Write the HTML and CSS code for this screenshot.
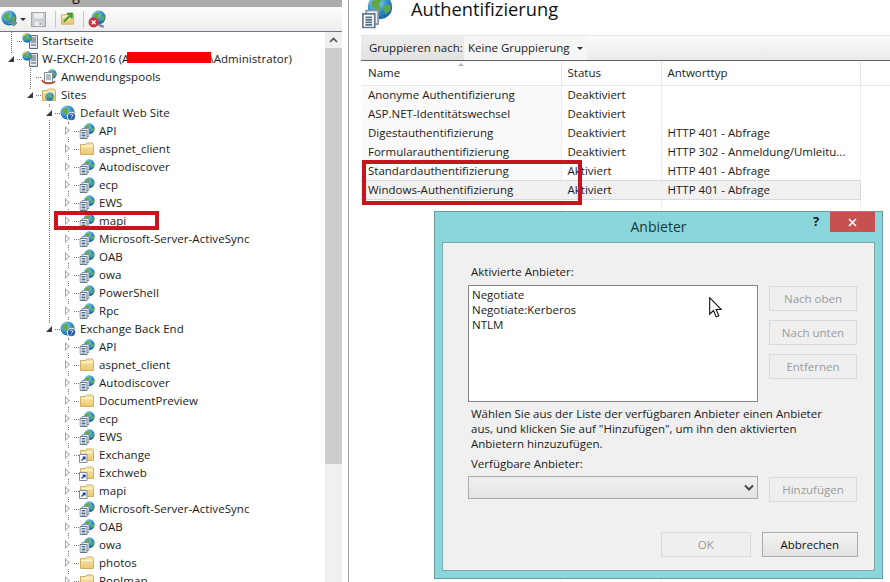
FILE: index.html
```html
<!DOCTYPE html>
<html lang="de">
<head>
<meta charset="utf-8">
<title>Authentifizierung</title>
<link rel="stylesheet" href="styles.css">
</head>
<body>
<svg class="defs" aria-hidden="true">
  <defs>
    <radialGradient id="gb" cx="0.35" cy="0.3" r="0.8"><stop offset="0" stop-color="#9fdcf5"/><stop offset="0.55" stop-color="#2f8fc9"/><stop offset="1" stop-color="#135a93"/></radialGradient>
    <linearGradient id="gf" x1="0" y1="0" x2="0" y2="1"><stop offset="0" stop-color="#fbeab4"/><stop offset="1" stop-color="#edc76e"/></linearGradient>
    <symbol id="globe" viewBox="0 0 16 16">
      <circle cx="8" cy="8" r="7.5" fill="url(#gb)"/>
      <path d="M3 4.500 7 2.500 9 4 7.500 6.500 8.500 9 6.500 11.500 5 9 2.500 7.500Z" fill="#5fa84a"/>
      <path d="M10.500 7 14.500 6.500 14.500 10 11.500 12.500 10.500 10Z" fill="#5fa84a"/>
    </symbol>
    <symbol id="doc" viewBox="0 0 10 11">
      <path d="M2.500.5h7v8h-7z" fill="#e8edf2" stroke="#8494a3"/>
      <path d="M.5 2.500h7v8h-7z" fill="#fff" stroke="#65788a"/>
      <path d="M2 4.500h4M2 6h4M2 7.500h4M2 9h4" stroke="#52708c"/>
    </symbol>
    <symbol id="app" viewBox="0 0 16 16">
      <use href="#globe" x="4.500" y="0" width="11.500" height="11.500"/>
      <use href="#doc" x="0.500" y="5" width="10" height="11"/>
    </symbol>
    <symbol id="app-large" viewBox="0 0 31 31">
      <use href="#globe" x="5" y="-6" width="26" height="26"/>
      <use href="#doc" x="0" y="9" width="17" height="20"/>
    </symbol>
    <symbol id="folder" viewBox="0 0 16 16">
      <path d="M1.500 3.500h5l1-1.500h6l1 1.500v10h-13z" fill="url(#gf)" stroke="#cfae68"/>
      <path d="M2.500 5.500h11" stroke="#fff6d8"/>
    </symbol>
    <symbol id="vdir" viewBox="0 0 16 16">
      <use href="#folder" width="16" height="16"/>
      <path d="M.5 7.500h7.500v8h-7.500z" fill="#fff" stroke="#7d8ca0"/>
      <path d="M2.500 13.500 5.500 10.500M3.500 10h2.500v2.500" fill="none" stroke="#1a3c8f" stroke-width="1.200"/>
    </symbol>
    <symbol id="site" viewBox="0 0 16 16">
      <use href="#globe" width="15" height="15"/>
      <circle cx="11.500" cy="11.500" r="4.200" fill="#2a5ea8" stroke="#fff"/>
      <path d="M10.200 10.200c.3-1.300 2.700-1.200 2.700.2 0 1-1.300 1-1.300 2M11.600 13.600v.6" fill="none" stroke="#fff"/>
    </symbol>
    <symbol id="server" viewBox="0 0 16 16">
      <path d="M7.500 2.500h8v13h-8z" fill="#dfe5ea" stroke="#5f6c78"/>
      <path d="M9 5h5M9 7h5M9 9h5M9 12h5" stroke="#4e5e6c"/>
      <use href="#globe" x="0" y="0" width="10" height="10"/>
      <path d="M1.500 2 5 .6" stroke="#f2c94c" stroke-width="1.500"/>
    </symbol>
    <symbol id="pools" viewBox="0 0 16 16">
      <use href="#globe" x="6" y="0" width="10" height="10"/>
      <path d="M3.500 3.500h8v10h-8z" fill="#fff" stroke="#7a8794"/>
      <path d="M5 6h5M5 8h5M5 10h5" stroke="#6a7a88"/>
      <path d="M1 11c1 4 11 5 13 1" fill="none" stroke="#c2472c" stroke-width="1.600"/>
    </symbol>
    <symbol id="sites" viewBox="0 0 16 16">
      <use href="#folder" width="16" height="16"/>
      <use href="#globe" x="4" y="5" width="9" height="9"/>
    </symbol>
  </defs>
</svg>

<div class="app">
  <aside class="left">
    <div class="strip"><span class="strip-text">Verbindungen</span></div>
    <div class="toolbar">
      <svg class="tb-big" viewBox="0 0 18 18"><use href="#globe" width="16" height="16"/><path d="M7 13h8m-3-3 3 3-3 3" fill="none" stroke="#6d8f8a" stroke-width="2"/></svg>
      <span class="tb-caret"></span>
      <svg class="tb-save" viewBox="0 0 16 16"><path d="M.5.500h15v15h-15z" fill="#c9cdd2" stroke="#9aa0a6"/><path d="M3 1h10v6h-10zM4 10h8v5h-8z" fill="#eceef0"/><path d="M9 11h2v3h-2z" fill="#9aa0a6"/></svg>
      <span class="tb-sep sep-a"></span>
      <svg class="tb-icon" viewBox="0 0 16 16"><use href="#folder" width="16" height="16"/><path d="M4 11 11 4M7.500 2.500h5v5" fill="none" stroke="#3c9a34" stroke-width="2.200"/></svg>
      <span class="tb-sep sep-b"></span>
      <svg class="tb-conn" viewBox="0 0 16 16"><use href="#globe" x="3" width="13" height="13"/><path d="M9 13l5 2" stroke="#7b8a99" stroke-width="2"/><circle cx="5" cy="11" r="4.500" fill="#c8323c"/><path d="M3.300 9.300l3.400 3.400m0-3.400-3.400 3.400" stroke="#fff" stroke-width="1.200"/></svg>
    </div>
    <div class="tree-wrap">
      <nav class="tree">
        <div class="g g0">
          <div class="row"><span class="exp"></span><span class="dots"></span><svg class="ic"><use href="#server"/></svg><span class="lbl">Startseite</span></div>
          <div class="row"><span class="exp open"></span><span class="dots short"></span><svg class="ic"><use href="#server"/></svg><span class="lbl">W-EXCH-2016 (A<span class="gap-name"></span>\Administrator)</span></div>
        </div>
        <div class="g g1">
          <div class="row"><span class="exp"></span><span class="dots"></span><svg class="ic"><use href="#pools"/></svg><span class="lbl">Anwendungspools</span></div>
          <div class="row"><span class="exp open"></span><span class="dots short"></span><svg class="ic"><use href="#sites"/></svg><span class="lbl">Sites</span></div>
        </div>
        <div class="g g2">
          <div class="row"><span class="exp open"></span><span class="dots short"></span><svg class="ic"><use href="#site"/></svg><span class="lbl">Default Web Site</span></div>
          <div class="g g3">
            <div class="row"><span class="exp closed"></span><span class="dots"></span><svg class="ic"><use href="#app"/></svg><span class="lbl">API</span></div>
            <div class="row"><span class="exp closed"></span><span class="dots"></span><svg class="ic"><use href="#folder"/></svg><span class="lbl">aspnet_client</span></div>
            <div class="row"><span class="exp closed"></span><span class="dots"></span><svg class="ic"><use href="#app"/></svg><span class="lbl">Autodiscover</span></div>
            <div class="row"><span class="exp closed"></span><span class="dots"></span><svg class="ic"><use href="#app"/></svg><span class="lbl">ecp</span></div>
            <div class="row"><span class="exp closed"></span><span class="dots"></span><svg class="ic"><use href="#app"/></svg><span class="lbl">EWS</span></div>
            <div class="row"><span class="exp closed"></span><span class="dots"></span><svg class="ic"><use href="#app"/></svg><span class="lbl">mapi</span></div>
            <div class="row"><span class="exp closed"></span><span class="dots"></span><svg class="ic"><use href="#app"/></svg><span class="lbl">Microsoft-Server-ActiveSync</span></div>
            <div class="row"><span class="exp closed"></span><span class="dots"></span><svg class="ic"><use href="#app"/></svg><span class="lbl">OAB</span></div>
            <div class="row"><span class="exp closed"></span><span class="dots"></span><svg class="ic"><use href="#app"/></svg><span class="lbl">owa</span></div>
            <div class="row"><span class="exp closed"></span><span class="dots"></span><svg class="ic"><use href="#app"/></svg><span class="lbl">PowerShell</span></div>
            <div class="row"><span class="exp closed"></span><span class="dots"></span><svg class="ic"><use href="#app"/></svg><span class="lbl">Rpc</span></div>
          </div>
          <div class="row"><span class="exp open"></span><span class="dots short"></span><svg class="ic"><use href="#site"/></svg><span class="lbl">Exchange Back End</span></div>
        </div>
        <div class="g g3-outer">
          <div class="row"><span class="exp closed"></span><span class="dots"></span><svg class="ic"><use href="#app"/></svg><span class="lbl">API</span></div>
          <div class="row"><span class="exp closed"></span><span class="dots"></span><svg class="ic"><use href="#folder"/></svg><span class="lbl">aspnet_client</span></div>
          <div class="row"><span class="exp closed"></span><span class="dots"></span><svg class="ic"><use href="#app"/></svg><span class="lbl">Autodiscover</span></div>
          <div class="row"><span class="exp closed"></span><span class="dots"></span><svg class="ic"><use href="#folder"/></svg><span class="lbl">DocumentPreview</span></div>
          <div class="row"><span class="exp closed"></span><span class="dots"></span><svg class="ic"><use href="#app"/></svg><span class="lbl">ecp</span></div>
          <div class="row"><span class="exp closed"></span><span class="dots"></span><svg class="ic"><use href="#app"/></svg><span class="lbl">EWS</span></div>
          <div class="row"><span class="exp closed"></span><span class="dots"></span><svg class="ic"><use href="#vdir"/></svg><span class="lbl">Exchange</span></div>
          <div class="row"><span class="exp closed"></span><span class="dots"></span><svg class="ic"><use href="#vdir"/></svg><span class="lbl">Exchweb</span></div>
          <div class="row"><span class="exp closed"></span><span class="dots"></span><svg class="ic"><use href="#vdir"/></svg><span class="lbl">mapi</span></div>
          <div class="row"><span class="exp closed"></span><span class="dots"></span><svg class="ic"><use href="#app"/></svg><span class="lbl">Microsoft-Server-ActiveSync</span></div>
          <div class="row"><span class="exp closed"></span><span class="dots"></span><svg class="ic"><use href="#app"/></svg><span class="lbl">OAB</span></div>
          <div class="row"><span class="exp closed"></span><span class="dots"></span><svg class="ic"><use href="#app"/></svg><span class="lbl">owa</span></div>
          <div class="row"><span class="exp closed"></span><span class="dots"></span><svg class="ic"><use href="#folder"/></svg><span class="lbl">photos</span></div>
          <div class="row"><span class="exp closed"></span><span class="dots"></span><svg class="ic"><use href="#folder"/></svg><span class="lbl">PopImap</span></div>
        </div>
      </nav>
      <div class="scrollbar">
        <div class="sb-up"><svg viewBox="0 0 9 6"><path d="M1 5 4.500 1.500 8 5" fill="none" stroke="#505050" stroke-width="1.600"/></svg></div>
        <div class="sb-thumb"></div>
      </div>
    </div>
  </aside>

  <main class="right">
    <header class="head">
      <svg class="head-icon"><use href="#app-large"/></svg>
      <h1>Authentifizierung</h1>
    </header>
    <div class="groupbar">
      <span class="gb-label">Gruppieren nach:</span>
      <span class="gb-value">Keine Gruppierung<span class="gb-caret"></span></span>
    </div>
    <div class="list">
      <table>
        <thead>
          <tr><th class="c1 sorted">Name</th><th class="c2">Status</th><th class="c3">Antworttyp</th><th></th></tr>
        </thead>
        <tbody>
          <tr><td class="c1">Anonyme Authentifizierung</td><td class="c2">Deaktiviert</td><td class="c3"></td><td></td></tr>
          <tr><td class="c1">ASP.NET-Identitätswechsel</td><td class="c2">Deaktiviert</td><td class="c3"></td><td></td></tr>
          <tr><td class="c1">Digestauthentifizierung</td><td class="c2">Deaktiviert</td><td class="c3">HTTP 401 - Abfrage</td><td></td></tr>
          <tr><td class="c1">Formularauthentifizierung</td><td class="c2">Deaktiviert</td><td class="c3">HTTP 302 - Anmeldung/Umleitu...</td><td></td></tr>
          <tr><td class="c1">Standardauthentifizierung</td><td class="c2">Aktiviert</td><td class="c3">HTTP 401 - Abfrage</td><td></td></tr>
          <tr class="sel"><td class="c1">Windows-Authentifizierung</td><td class="c2">Aktiviert</td><td class="c3">HTTP 401 - Abfrage</td><td></td></tr>
          <tr class="filler"><td class="c1"></td><td class="c2"></td><td class="c3"></td><td></td></tr>
        </tbody>
      </table>
    </div>
  </main>
</div>

<div class="redact"></div>
<div class="mark mark-tree"></div>
<div class="mark mark-list"></div>

<section class="dialog">
  <div class="titlebar">
    <span class="title">Anbieter</span>
    <span class="help">?</span>
    <span class="close"><svg viewBox="0 0 9 9"><path d="M1 1 8 8M8 1 1 8" stroke="#fff" stroke-width="1.600"/></svg></span>
  </div>
  <div class="client">
    <div class="providers">
      <label class="cap">Aktivierte Anbieter:</label>
      <div class="pgrid">
        <div class="listbox">
          <div>Negotiate</div>
          <div>Negotiate:Kerberos</div>
          <div>NTLM</div>
        </div>
        <div class="side">
          <span class="btn off">Nach oben</span>
          <span class="btn off">Nach unten</span>
          <span class="btn off">Entfernen</span>
        </div>
      </div>
    </div>
    <p class="hint">Wählen Sie aus der Liste der verfügbaren Anbieter einen Anbieter<br>aus, und klicken Sie auf "Hinzufügen", um ihn den aktivierten<br>Anbietern hinzuzufügen.</p>
    <label class="cap cap2">Verfügbare Anbieter:</label>
    <div class="pgrid pgrid2">
      <div class="select"><svg viewBox="0 0 10 7"><path d="M1 1.500 5 5.500 9 1.500" fill="none" stroke="#4a4a4a" stroke-width="2"/></svg></div>
      <span class="btn off">Hinzufügen</span>
    </div>
    <div class="actions">
      <span class="btn off wide-ok">OK</span>
      <span class="btn cancel">Abbrechen</span>
    </div>
  </div>
  <svg class="cursor" viewBox="0 0 13 21"><path d="M.7.700v16.500l3.800-3.700 2.700 6.400 2.600-1.100-2.700-6.300h5.200z" fill="#fff" stroke="#111" stroke-width="1.100"/></svg>
</section>
</body>
</html>
```
FILE: styles.css
```css
* { box-sizing: border-box; }
html, body { margin: 0; padding: 0; }
body {
  width: 890px; height: 582px; overflow: hidden; position: relative;
  background: #fff; color: #1a1a1a;
  font-family: "Open Sans", "Noto Sans", sans-serif; font-size: 12px;
}
.defs { position: absolute; width: 0; height: 0; }
.app { display: flex; height: 582px; }

/* left pane */
.left { width: 342px; flex: none; display: flex; flex-direction: column; height: 582px; }
.strip { height: 7px; background: #ababab; overflow: hidden; flex: none; }
.strip-text { display: block; margin: -14px 0 0 4px; font-size: 14px; line-height: 18px; color: #111; }
.toolbar {
  height: 25px; flex: none; display: flex; align-items: center; padding-left: 1px;
  background: linear-gradient(#fdfdfd, #ececec); border-bottom: 1px solid #6f7480;
}
.tb-big { width: 18px; height: 18px; flex: none; }
.tb-caret { width: 0; height: 0; margin: 0 5px 0 1px; border: 3px solid transparent; border-top: 3px solid #333; border-bottom: 0; }
.tb-save { width: 15px; height: 15px; flex: none; }
.tb-sep { width: 1px; height: 17px; background: #c8c8c8; flex: none; }
.sep-a { margin: 0 4px 0 9px; }
.sep-b { margin: 0 4px 0 8px; }
.tb-icon { width: 15px; height: 16px; flex: none; }
.tb-conn { width: 18px; height: 18px; flex: none; }

.tree-wrap { flex: 1; display: flex; min-height: 0; }
.tree { flex: 1; overflow: hidden; }
.g { position: relative; }
.g::before {
  content: ""; position: absolute; left: 0; top: 0; bottom: 9px;
  border-left: 1px dotted #777;
}
.g0 { margin-left: 11px; }
.g1 { margin-left: 30px; }
.g2 { margin-left: 49px; }
.g3 { margin-left: 19px; }
.g3::before { bottom: 0; }
.g3-outer { margin-left: 68px; }
.g3-outer::before { bottom: 0; }
.row { position: relative; display: flex; align-items: center; height: 18px; white-space: nowrap; font-size: 11.5px; }
.exp { width: 12px; height: 12px; margin-left: -6px; flex: none; position: relative; background: #fff; display: block; }
.exp:not(.open):not(.closed) { background: none; }
.exp.open::after {
  content: ""; position: absolute; left: 3px; top: 3px; width: 0; height: 0;
  border-style: solid; border-width: 0 0 6px 6px; border-color: transparent transparent #3a3a3a transparent;
}
.exp.closed::after {
  content: ""; position: absolute; left: 3px; top: 1px; width: 5px; height: 9px;
  background: #a6a6a6; clip-path: polygon(0 0, 100% 50%, 0 100%, 0 0, 1px 2px, 1px calc(100% - 2px), calc(100% - 1.400px) 50%, 1px 2px);
}
.dots { width: 5px; flex: none; border-top: 1px dotted #777; }
.ic { width: 16px; height: 16px; flex: none; }
.lbl { margin: 0 0 2px 4px; letter-spacing: 0.05px; }
.gap-name { display: inline-block; width: 80px; }

.scrollbar { width: 17px; flex: none; background: #f0f0f0; display: flex; flex-direction: column; }
.sb-up { height: 16px; flex: none; display: flex; align-items: center; justify-content: center; }
.sb-up svg { width: 9px; height: 6px; }
.sb-thumb { height: 416px; flex: none; background: #cdcdcd; }

/* right pane */
.right { flex: 1; margin-left: 6px; border-left: 1px solid #a3a3a3; display: flex; flex-direction: column; min-width: 0; }
.head { height: 35px; flex: none; display: flex; align-items: flex-start; padding-left: 13px; }
.head-icon { width: 31px; height: 31px; flex: none; overflow: visible; }
h1 { margin: -4px 0 0 18px; font-size: 18.3px; font-weight: 400; line-height: 26px; color: #111; }
.groupbar {
  height: 26px; flex: none; margin-left: 12px; display: flex; align-items: stretch;
  background: linear-gradient(#fbfbfb, #eaeaea); border-top: 1px solid #e3e3e3; border-bottom: 1px solid #5e6470;
}
.gb-label { width: 103px; flex: none; padding-left: 8px; background: linear-gradient(#ededed, #e2e2e2); line-height: 24px; font-size: 11.5px; white-space: nowrap; }
.gb-value { width: 123px; flex: none; padding-left: 4px; background: #f6f6f6; line-height: 24px; font-size: 11.5px; position: relative; white-space: nowrap; }
.gb-caret { position: absolute; right: 4px; top: 11px; border: 3px solid transparent; border-top: 3px solid #333; border-bottom: 0; }
.list { flex: 1; margin-left: 12px; min-height: 0; }
table { border-collapse: collapse; table-layout: fixed; width: 100%; height: 100%; font-size: 11.5px; }
th, td { padding: 0 0 0 7px; text-align: left; font-weight: 400; white-space: nowrap; overflow: hidden; border-right: 1px solid #ededed; }
th { height: 24px; border-bottom: 1px solid #e6e6e6; border-right-color: #e6e6e6; }
td { height: 19px; }
.c1 { width: 200px; background: #fafafa; }
.c2 { width: 100px; padding-left: 6px; }
.c3 { width: 199px; padding-left: 6px; }
th:last-child, td:last-child { border-right: 0; }
.sorted { position: relative; background: #fff; }
.sorted::after { content: ""; position: absolute; left: 97px; top: 2px; border: 3px solid transparent; border-bottom: 3px solid #b5b5b5; border-top: 0; }
.sel td { background: #f1f1f1; border-top: 1px solid #d9d9d9; border-bottom: 1px solid #d9d9d9; }
.sel td.c3 { border-right: 1px solid #d9d9d9; }
.sel td:last-child { background: #fff; border-top: 0; border-bottom: 0; }
.filler td { height: auto; background: #fff; }

/* overlays */
.redact { position: absolute; left: 127px; top: 52px; width: 84px; height: 11px; background: #fb0000; }
.mark { position: absolute; border: 4px solid #c5161d; }
.mark-tree { left: 54px; top: 211px; width: 105px; height: 19px; }
.mark-list { left: 362px; top: 160px; width: 220px; height: 45px; }

/* dialog */
.dialog {
  position: absolute; left: 434px; top: 211px; width: 449px; height: 368px;
  background: #8ad6da; border: 1px solid #6a9a9e; display: flex; flex-direction: column;
}
.titlebar { height: 30px; flex: none; position: relative; text-align: center; }
.title { font-size: 14px; line-height: 30px; color: #17393b; }
.help { position: absolute; left: 378px; top: -1px; font-size: 13px; font-weight: 700; line-height: 20px; color: #222; }
.close {
  position: absolute; left: 395px; top: 0; width: 45px; height: 20px; background: #c75050;
  display: flex; align-items: center; justify-content: center;
}
.close svg { width: 9px; height: 9px; }
.client {
  flex: 1; margin: 0 7px 7px; background: #f0f0f0; border: 1px solid #78a8ac;
  padding: 21px 16px 0 25px; display: flex; flex-direction: column; font-size: 11.5px;
}
.cap { display: block; padding-left: 3px; line-height: 15px; }
.pgrid { display: grid; grid-template-columns: 290px 88px; column-gap: 11px; margin-top: 6px; }
.listbox { height: 117px; background: #fff; border: 1px solid #82858a; padding: 1px 3px; line-height: 15px; }
.side { display: flex; flex-direction: column; gap: 9px; padding-top: 1px; }
.btn { display: flex; align-items: center; justify-content: center; height: 25px; border: 1px solid #acacac; }
.btn.off { border-color: #d9d9d9; color: #9b9b9b; background: #efefef; }
.hint { margin: 4px 0 0; padding-left: 3px; line-height: 15px; }
.cap2 { margin-top: 5px; }
.pgrid2 { margin-top: 5px; align-items: start; }
.pgrid2 .btn { margin-top: 1px; }
.select { height: 23px; border: 1px solid #acacac; background: linear-gradient(#efefef, #e4e4e4); display: flex; align-items: center; justify-content: flex-end; padding-right: 3px; }
.select svg { width: 10px; height: 7px; }
.actions { display: flex; gap: 11px; margin-top: 30px; margin-left: 193px; }
.wide-ok { width: 90px; }
.cancel { width: 97px; background: linear-gradient(#f3f3f3, #e3e3e3); color: #111; }
.cursor { position: absolute; left: 274px; top: 85px; width: 13px; height: 21px; }
```
